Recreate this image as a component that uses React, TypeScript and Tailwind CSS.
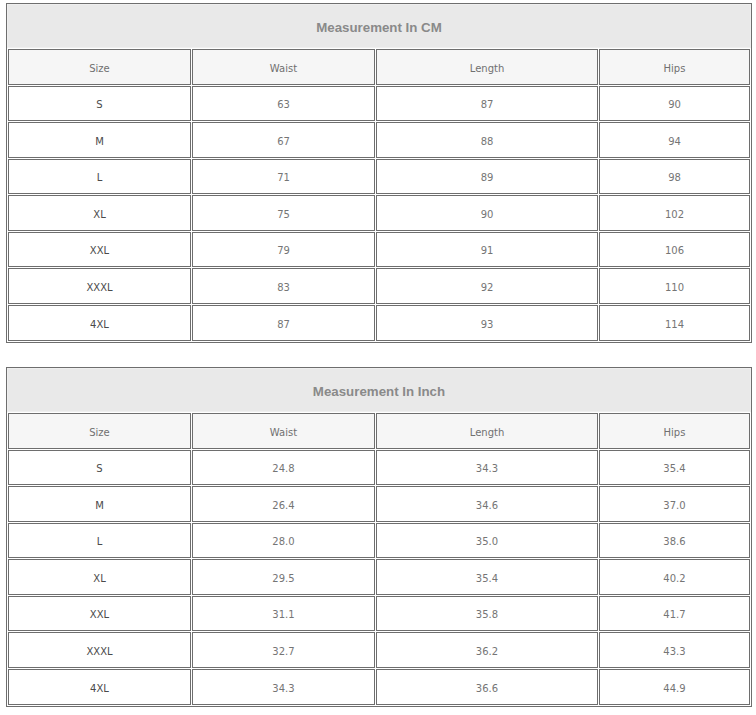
const headers = ['Size', 'Waist', 'Length', 'Hips']

const sizes = ['S', 'M', 'L', 'XL', 'XXL', 'XXXL', '4XL']

const cmRows = [
  ['63', '87', '90'],
  ['67', '88', '94'],
  ['71', '89', '98'],
  ['75', '90', '102'],
  ['79', '91', '106'],
  ['83', '92', '110'],
  ['87', '93', '114'],
]

const inchRows = [
  ['24.8', '34.3', '35.4'],
  ['26.4', '34.6', '37.0'],
  ['28.0', '35.0', '38.6'],
  ['29.5', '35.4', '40.2'],
  ['31.1', '35.8', '41.7'],
  ['32.7', '36.2', '43.3'],
  ['34.3', '36.6', '44.9'],
]

const rowHeights = ['h-[35px]', 'h-[36px]', 'h-[35px]', 'h-[36px]', 'h-[35px]', 'h-[36px]', 'h-[36px]']

function SizeTable({ title, rows }: { title: string; rows: string[][] }) {
  return (
    <div className="w-[746px] border border-[#6e6e6e] bg-white">
      {/* title row */}
      <div className="h-[44px] flex items-center justify-center bg-[#e9e9e9] border border-[#efefef]">
        <span className="font-['Liberation_Sans',Arial,sans-serif] font-bold text-[13.3px] text-[#8a8a8a] pt-[4px]">
          {title}
        </span>
      </div>
      <div className="grid grid-cols-[183px_183px_222px_151px] gap-px p-px">
        {headers.map((h) => (
          <div
            key={h}
            className="h-[36px] flex items-center justify-center border border-[#6e6e6e] bg-[#f6f6f6] text-[10px] text-[#707070] pt-[2px]"
          >
            {h}
          </div>
        ))}
        {rows.map((r, i) => (
          <div key={sizes[i]} className="contents">
            <div
              className={`${rowHeights[i]} flex items-center justify-center border border-[#6e6e6e] text-[10px] text-[#4a4a4a] pt-[2px]`}
            >
              {sizes[i]}
            </div>
            {r.map((v, j) => (
              <div
                key={j}
                className={`${rowHeights[i]} flex items-center justify-center border border-[#6e6e6e] text-[10px] text-[#757575] pt-[2px]`}
              >
                {v}
              </div>
            ))}
          </div>
        ))}
      </div>
    </div>
  )
}

export default function App() {
  return (
    <div className="w-[756px] h-[715px] bg-white pl-[6px] pt-[3px] font-['DejaVu_Sans',Verdana,sans-serif]">
      <div className="flex flex-col gap-[24px]">
        <SizeTable title="Measurement In CM" rows={cmRows} />
        <SizeTable title="Measurement In Inch" rows={inchRows} />
      </div>
    </div>
  )
}
